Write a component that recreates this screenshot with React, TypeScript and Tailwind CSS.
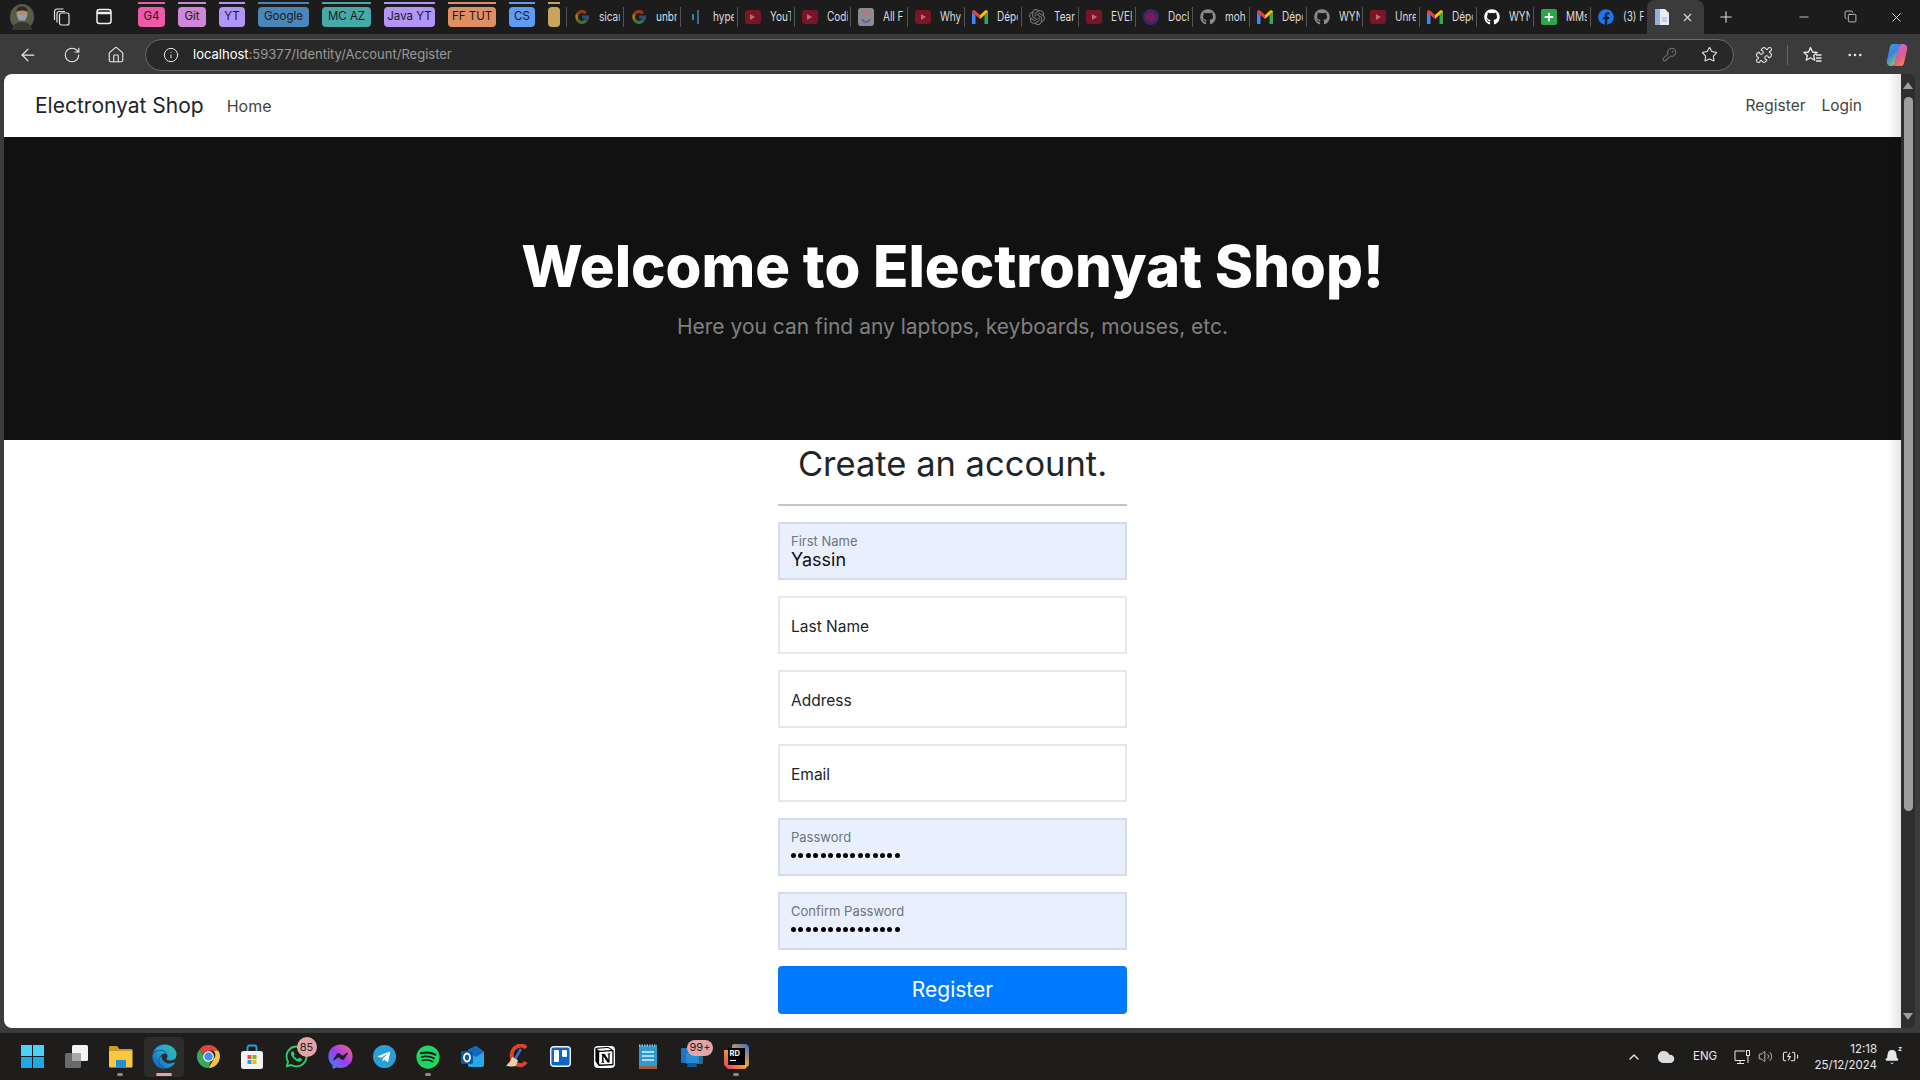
import { ArrowLeft, RotateCw, Home, Info, KeyRound, Star, Puzzle, MoreHorizontal, Plus, X, Minus, Copy, ChevronUp, Cloud, Volume2, BatteryCharging, Bell } from 'lucide-react'
import { FaGithub, FaFacebook, FaWhatsapp, FaFacebookMessenger, FaTelegramPlane, FaSpotify, FaPlus, FaEdge } from 'react-icons/fa'
import { FcGoogle } from 'react-icons/fc'
import { SiNotion, SiOpenai } from 'react-icons/si'

const bookmarks = [
  { label: 'G4', width: 'w-[27px]', mr: 'mr-[13px]', bg: 'bg-[#ec5aa8]' },
  { label: 'Git', width: 'w-[28px]', mr: 'mr-[13px]', bg: 'bg-[#cf87d9]' },
  { label: 'YT', width: 'w-[26px]', mr: 'mr-[13px]', bg: 'bg-[#b295f5]' },
  { label: 'Google', width: 'w-[51px]', mr: 'mr-[13px]', bg: 'bg-[#4a87b8]' },
  { label: 'MC AZ', width: 'w-[49px]', mr: 'mr-[13px]', bg: 'bg-[#45aaa8]' },
  { label: 'Java YT', width: 'w-[51px]', mr: 'mr-[13px]', bg: 'bg-[#b295f5]' },
  { label: 'FF TUT', width: 'w-[48px]', mr: 'mr-[13px]', bg: 'bg-[#e08e63]' },
  { label: 'CS', width: 'w-[26px]', mr: 'mr-[13px]', bg: 'bg-[#5f9bf2]' },
  { label: '', width: 'w-[12px]', mr: 'mr-[6px]', bg: 'bg-[#c9a55c]' },
]

function YouTubeIcon() {
  return (
    <span className="flex h-[14px] w-[16px] items-center justify-center rounded-[3px] bg-[#7a1528]">
      <span className="h-0 w-0 border-y-[3px] border-l-[5px] border-y-transparent border-l-[#b86a78]" />
    </span>
  )
}

function GmailIcon() {
  return (
    <svg width="16" height="14" viewBox="0 0 16 14">
      <path d="M0 2v12h3.5V5z" fill="#4285f4" />
      <path d="M16 2v12h-3.5V5z" fill="#34a853" />
      <path d="M0 2l3.5 3L8 9V5L3 0.6C1.5 0 0 0.6 0 2z" fill="#ea4335" />
      <path d="M16 2l-3.5 3L8 9V5l5-4.4C14.5 0 16 0.6 16 2z" fill="#fbbc04" />
    </svg>
  )
}

function ClickUpIcon() {
  return (
    <svg width="16" height="18" viewBox="0 0 16 18">
      <rect width="16" height="18" rx="3" fill="#8c8c8c" />
      <path d="M4.5 7.5L8 4.5l3.5 3" fill="none" stroke="#e0607a" strokeWidth="1.6" />
      <path d="M4 11c1 2 2.500 3 4 3s3-1 4-3" fill="none" stroke="#4a55d0" strokeWidth="1.6" />
    </svg>
  )
}

const tabs = [
  { icon: <FcGoogle className="h-4 w-4 opacity-60" />, title: 'sicar' },
  { icon: <FcGoogle className="h-4 w-4 opacity-60" />, title: 'unbr' },
  { icon: <span className="flex h-4 w-4 items-center justify-center gap-[3px]"><span className="h-[6px] w-[2px] bg-[#2a8a9a]" /><span className="h-[14px] w-[2px] bg-[#3a6a9a]" /></span>, title: 'hype' },
  { icon: <YouTubeIcon />, title: 'YouT' },
  { icon: <YouTubeIcon />, title: 'Codi' },
  { icon: <ClickUpIcon />, title: 'All F' },
  { icon: <YouTubeIcon />, title: 'Why' },
  { icon: <GmailIcon />, title: 'Dépc' },
  { icon: <SiOpenai className="h-4 w-4 text-[#777]" />, title: 'Tean' },
  { icon: <YouTubeIcon />, title: 'EVEF' },
  { icon: <span className="h-4 w-4 rounded-full border-[3px] border-[#34286e] bg-[#7a1a50]" />, title: 'Dock' },
  { icon: <FaGithub className="h-4 w-4 text-[#8a8a8a]" />, title: 'moh' },
  { icon: <GmailIcon />, title: 'Dépc' },
  { icon: <FaGithub className="h-4 w-4 text-[#8a8a8a]" />, title: 'WYN' },
  { icon: <YouTubeIcon />, title: 'Unre' },
  { icon: <GmailIcon />, title: 'Dépc' },
  { icon: <FaGithub className="h-4 w-4 text-white" />, title: 'WYN' },
  { icon: <span className="flex h-4 w-4 items-center justify-center rounded-[2px] bg-[#2ea44f]"><FaPlus className="h-[10px] w-[10px] text-white" /></span>, title: 'MMs' },
  { icon: <FaFacebook className="h-4 w-4 text-[#1877f2]" />, title: '(3) F' },
]

function Avatar() {
  return (
    <svg width="24" height="26" viewBox="0 0 24 26">
      <ellipse cx="12" cy="13" rx="12" ry="13" fill="#5a5a48" />
      <path d="M2 26c1-6 5-8 10-8s9 2 10 8z" fill="#37382f" />
      <ellipse cx="12" cy="10" rx="5.500" ry="6.500" fill="#a9917c" />
      <path d="M6.500 8c0-4 2.500-5.500 5.500-5.500S17.500 4 17.500 8c-2-2-9-2-11 0z" fill="#33291f" />
      <path d="M7.500 11h9l-1 5.500h-7z" fill="#8fa3a8" />
    </svg>
  )
}

function WorkspacesIcon() {
  return (
    <svg width="17" height="18" viewBox="0 0 17 18" fill="none" stroke="#e4e4e4" strokeWidth="1.2">
      <rect x="6.500" y="5" width="9.500" height="12" rx="2" />
      <path d="M4 14.500V6c0-1.500.8-2.500 2-2.500h6" />
      <path d="M1.500 12V4c0-1.800 1-3 2.500-3h6.500" />
    </svg>
  )
}

function TabsIcon() {
  return (
    <svg width="16" height="17" viewBox="0 0 16 17" fill="none" stroke="#f0f0f0" strokeWidth="1.500">
      <rect x="1" y="1.500" width="14" height="14" rx="2.500" />
      <path d="M1 5h14" strokeWidth="2.500" />
    </svg>
  )
}

function FavoritesIcon() {
  return (
    <svg width="19" height="18" viewBox="0 0 19 18" fill="none" stroke="#e8e8e8" strokeWidth="1.300">
      <path d="M7.500 1.500l2 4.500 4.500.5-3.300 3 1 4.700-4.200-2.400-4.200 2.400 1-4.700L1 6.500 5.500 6z" strokeLinejoin="round" />
      <path d="M13 9h5.500M13 12h5.500M13 15h5.500" />
    </svg>
  )
}

function CopilotIcon() {
  return (
    <svg width="22" height="24" viewBox="0 0 22 24">
      <path d="M7 1h7L9 20c-.8 2.500-2 3-4 3-3 0-5-2.500-4-6L4 4c.5-2 1.500-3 3-3z" fill="url(#copLeft)" />
      <path d="M15 23H8l5-19c.6-2.500 2-3 4-3 3 0 5 2.500 4 6l-3 13c-.5 2-1.500 3-3 3z" fill="url(#copRight)" />
    </svg>
  )
}

function ActiveTabIcon() {
  return (
    <svg width="16" height="18" viewBox="0 0 16 18">
      <path d="M1 1h10l4 4v12H1z" fill="#e6edf5" />
      <rect x="1" y="1" width="5" height="16" fill="#8fb4d6" />
      <rect x="8" y="9" width="5" height="5" fill="#c4d2df" />
    </svg>
  )
}

function Badge({ text, className }: { text: string; className: string }) {
  return (
    <span className={`absolute flex items-center justify-center rounded-full bg-[#e3a6a6] text-[11px] text-[#222] ${className}`}>{text}</span>
  )
}

function TaskIcon({ children, active, running }: { children: React.ReactNode; active?: boolean; running?: boolean }) {
  return (
    <div className="relative flex h-[40px] w-[44px] shrink-0 items-center justify-center">
      {active && <span className="absolute inset-y-0 left-[2px] right-[2px] rounded-[4px] bg-[#2e2b2b]" />}
      <span className="relative flex items-center justify-center">{children}</span>
      {active && <span className="absolute bottom-[1px] h-[3px] w-[16px] rounded-full bg-[#e3a6a6]" />}
      {running && <span className="absolute bottom-[1px] h-[3px] w-[6px] rounded-full bg-[#8a8a8a]" />}
    </div>
  )
}

function FilledField({ label, value, password }: { label: string; value: string; password?: boolean }) {
  return (
    <div className="flex h-[58px] flex-col border-2 border-[#d3dcea] bg-[#e8f0fe] pl-[11px]">
      <span className="mt-[8px] text-[13px] leading-[18px] text-[#6c757d]">{label}</span>
      {password ? (
        <span className="mt-[1px] flex gap-[2.43px] pt-[6px]">
          {Array.from({ length: 15 }).map((_, i) => (
            <span key={i} className="h-[5px] w-[5px] rounded-full bg-black" />
          ))}
        </span>
      ) : (
        <span className="text-[18px] leading-[20px] text-[#111]">{value}</span>
      )}
    </div>
  )
}

function EmptyField({ label }: { label: string }) {
  return (
    <div className="flex h-[58px] items-center border-2 border-[#e6e8ec] bg-white pl-[11px] pt-[3px] text-[15.5px] text-[#212529]">
      {label}
    </div>
  )
}

export default function App() {
  return (
    <div className="flex h-screen w-full flex-col overflow-hidden bg-[#3b3b3b] font-['Inter','Liberation_Sans',sans-serif]">
      <svg className="absolute h-0 w-0">
        <defs>
          <linearGradient id="copLeft" x1="0" y1="0" x2="0.6" y2="1">
            <stop offset="0" stopColor="#2fb6d8" />
            <stop offset="0.5" stopColor="#3f7fe8" />
            <stop offset="1" stopColor="#8fd24a" />
          </linearGradient>
          <linearGradient id="copRight" x1="0.4" y1="0" x2="1" y2="1">
            <stop offset="0" stopColor="#b26be0" />
            <stop offset="0.5" stopColor="#e85a8a" />
            <stop offset="1" stopColor="#f59a3a" />
          </linearGradient>
          <linearGradient id="edgeFill" x1="1" y1="0" x2="0" y2="1">
            <stop offset="0" stopColor="#35c1a0" />
            <stop offset="0.5" stopColor="#1f9fe0" />
            <stop offset="1" stopColor="#0c59a4" />
          </linearGradient>
          <linearGradient id="messengerFill" x1="0" y1="1" x2="1" y2="0">
            <stop offset="0" stopColor="#2f8bfb" />
            <stop offset="0.5" stopColor="#a03cf0" />
            <stop offset="1" stopColor="#fb6a70" />
          </linearGradient>
          <linearGradient id="riderFill" x1="0" y1="1" x2="1" y2="0">
            <stop offset="0" stopColor="#e8336b" />
            <stop offset="0.5" stopColor="#f0a828" />
            <stop offset="1" stopColor="#2f6fe0" />
          </linearGradient>
        </defs>
      </svg>

      {/* tab strip */}
      <div className="flex h-[34px] shrink-0 items-start bg-[#1c1c1c] text-[#dcdcdc]">
        <div className="ml-[10px] mr-[19px] mt-[4px]"><Avatar /></div>
        <div className="mr-[26px] mt-[8px]"><WorkspacesIcon /></div>
        <div className="mr-[26px] mt-[8px]"><TabsIcon /></div>
        {bookmarks.map((b, i) => (
          <div key={i} className={`${b.width} ${b.mr} mt-[2px] shrink-0`}>
            <div className={`h-[2px] ${b.bg}`} />
            <div className={`mt-[3px] flex h-[20px] items-center justify-center rounded-[4px] text-[11.5px] text-[#1a1a1a] ${b.bg}`}>{b.label}</div>
          </div>
        ))}
        {tabs.map((t, i) => (
          <div key={i} className="mt-[7px] flex h-[20px] w-[56.9px] shrink-0 items-center border-l border-[#555] pl-[7px]">
            <span className="flex h-4 w-[16px] shrink-0 items-center justify-center">{t.icon}</span>
            <span className="ml-[9px] w-[26px] shrink-0 origin-left scale-x-[0.8] overflow-hidden whitespace-nowrap text-[12.5px]">{t.title}</span>
          </div>
        ))}
        <div className="flex h-[34px] w-[57px] shrink-0 items-center rounded-t-[8px] bg-[#3b3b3b] pl-[7px]">
          <ActiveTabIcon />
          <X className="ml-[11px] h-[13px] w-[13px]" />
        </div>
        <Plus className="ml-[13px] mt-[8px] h-[18px] w-[18px]" strokeWidth={1.5} />
        <div className="ml-auto mr-[16px] mt-[10px] flex gap-[33px]">
          <Minus className="h-[14px] w-[14px]" strokeWidth={1.5} />
          <Copy className="h-[13px] w-[13px]" strokeWidth={1.5} />
          <X className="-ml-px h-[15px] w-[15px]" strokeWidth={1.5} />
        </div>
      </div>

      {/* toolbar */}
      <div className="flex h-[40px] shrink-0 items-center bg-[#3b3b3b] pt-[1px] text-[#e8e8e8]">
        <ArrowLeft className="ml-[18px] h-[20px] w-[20px]" strokeWidth={1.5} />
        <RotateCw className="ml-[25px] h-[18px] w-[18px]" strokeWidth={1.5} />
        <Home className="ml-[26px] h-[18px] w-[18px]" strokeWidth={1.5} />
        <div className="ml-[20px] flex h-[32px] w-[1589px] items-center rounded-full border border-[#6a6a6a] bg-[#282828]">
          <Info className="ml-[17px] h-[16px] w-[16px]" strokeWidth={1.5} />
          <span className="ml-[14px] text-[13px] text-white">localhost<span className="text-[#9a9a9a]">:59377/Identity/Account/Register</span></span>
          <KeyRound className="ml-auto h-[15px] w-[15px] text-[#888]" strokeWidth={1.5} />
          <Star className="ml-[24px] mr-[15px] h-[17px] w-[17px]" strokeWidth={1.5} />
        </div>
        <Puzzle className="ml-[21px] h-[18px] w-[18px]" strokeWidth={1.5} />
        <span className="ml-[14px] h-[20px] w-px bg-[#666]" />
        <div className="ml-[15px]"><FavoritesIcon /></div>
        <MoreHorizontal className="ml-[24px] h-[18px] w-[18px]" strokeWidth={1.5} />
        <div className="ml-[22px]"><CopilotIcon /></div>
      </div>

      {/* page area */}
      <div className="flex min-h-0 flex-1 pl-[4px]">
        <div className="relative flex min-w-0 flex-1 flex-col overflow-hidden rounded-l-[8px] bg-white">
          <nav className="flex h-[63px] shrink-0 items-center pl-[31px] pr-[39px] text-[#212529]">
            <span className="text-[21px]">Electronyat Shop</span>
            <span className="ml-[23px] text-[16px] text-[#444]">Home</span>
            <span className="ml-auto text-[15.5px] text-[#444]">Register</span>
            <span className="ml-[16px] text-[15.5px] text-[#444]">Login</span>
          </nav>
          <header className="flex h-[303px] shrink-0 flex-col items-center bg-[#111112] pt-[91px]">
            <h1 className="text-[58px] font-extrabold leading-[76px] text-white">Welcome to Electronyat Shop!</h1>
            <p className="mt-[8px] text-[21px] leading-[30px] text-[#808080]">Here you can find any laptops, keyboards, mouses, etc.</p>
          </header>
          <main className="mx-auto flex w-[349px] flex-col">
            <h2 className="mt-[2px] text-center text-[34.5px] leading-[44px] text-[#212529]">Create an account.</h2>
            <hr className="mt-[18px] border-t-2 border-[#c6c6c6]" />
            <div className="mt-[16px] flex flex-col gap-[16px]">
              <FilledField label="First Name" value="Yassin" />
              <EmptyField label="Last Name" />
              <EmptyField label="Address" />
              <EmptyField label="Email" />
              <FilledField label="Password" value="" password />
              <FilledField label="Confirm Password" value="" password />
              <button className="flex h-[48px] items-center justify-center rounded-[4px] bg-[#007bff] text-[21px] text-white">Register</button>
            </div>
          </main>
          <span className="pointer-events-none absolute inset-y-0 right-0 w-[14px] bg-gradient-to-l from-black/10 to-transparent" />
        </div>
        <div className="mr-[5px] flex w-[14px] shrink-0 flex-col items-center rounded-r-[6px] bg-[#2e2e2e]">
          <span className="mt-[8px] h-0 w-0 border-x-[5px] border-b-[7px] border-x-transparent border-b-[#9e9e9e]" />
          <span className="mt-[8px] h-[714px] w-[9px] rounded-full bg-[#9e9e9e]" />
          <span className="mb-[8px] mt-auto h-0 w-0 border-x-[5px] border-t-[7px] border-x-transparent border-t-[#9e9e9e]" />
        </div>
      </div>

      {/* taskbar */}
      <div className="mt-[5px] flex h-[47px] shrink-0 items-center bg-[#1f1c1c] pl-[10px] text-[#e8e8e8]">
        <TaskIcon>
          <span className="grid h-[23px] w-[23px] grid-cols-2 gap-[1px]">
            <span className="bg-[#4fd0f7]" />
            <span className="bg-[#4fd0f7]" />
            <span className="bg-[#1ea8e6]" />
            <span className="bg-[#1ea8e6]" />
          </span>
        </TaskIcon>
        <TaskIcon>
          <svg width="25" height="25" viewBox="0 0 25 25">
            <rect x="1" y="9" width="16" height="15" rx="1.500" fill="#6a6a6a" />
            <rect x="8" y="1" width="16" height="16" rx="1.500" fill="#f4f4f4" />
            <rect x="8" y="9" width="9" height="8" fill="#a8a8a8" />
          </svg>
        </TaskIcon>
        <TaskIcon running>
          <svg width="25" height="24" viewBox="0 0 25 24">
            <path d="M1 3c0-1 .5-2 2-2h6l2 3h12c1 0 1.500 .5 1.500 1.500V21c0 1-.5 1.500-1.500 1.500H2.500C1.500 22.500 1 22 1 21z" fill="#f6c945" />
            <path d="M1 3c0-1 .5-2 2-2h6l2 3h13v2H1z" fill="#d39a1e" />
            <rect x="8" y="15" width="10" height="7.500" rx="1" fill="#1f8fd8" />
          </svg>
        </TaskIcon>
        <TaskIcon active>
          <FaEdge className="h-[25px] w-[25px]" fill="url(#edgeFill)" />
        </TaskIcon>
        <TaskIcon>
          <svg width="25" height="25" viewBox="0 0 24 24">
            <path d="M12 1a11 11 0 0 1 9.500 5.500H12a5.500 5.500 0 0 0-5.200 3.700L3.500 5A11 11 0 0 1 12 1z" fill="#e0453a" />
            <path d="M21.500 6.500A11 11 0 0 1 12 23l4.700-8.200a5.500 5.500 0 0 0 0-8.300z" fill="#f6c63e" />
            <path d="M12 23A11 11 0 0 1 3.500 5l4.800 8.500a5.500 5.500 0 0 0 5.700 3.800z" fill="#3aa757" />
            <circle cx="12" cy="12" r="5.200" fill="#fff" />
            <circle cx="12" cy="12" r="4.100" fill="#4a8af4" />
          </svg>
        </TaskIcon>
        <TaskIcon>
          <svg width="24" height="26" viewBox="0 0 24 26">
            <path d="M7.500 8V4c0-1.500 1-2.500 2-2.500h5c1 0 2 1 2 2.500v4" fill="none" stroke="#1fa3e6" strokeWidth="1.800" />
            <rect x="1" y="7" width="22" height="18" rx="2.500" fill="#f2f2f2" />
            <rect x="7.500" y="11" width="4" height="4" fill="#e8562e" />
            <rect x="12.500" y="11" width="4" height="4" fill="#7cb82f" />
            <rect x="7.500" y="16" width="4" height="4" fill="#1fa3e6" />
            <rect x="12.500" y="16" width="4" height="4" fill="#f6b900" />
          </svg>
        </TaskIcon>
        <TaskIcon>
          <FaWhatsapp className="h-[25px] w-[25px] text-[#25d366]" />
          <Badge text="85" className="-right-[8px] -top-[7px] h-[20px] w-[20px]" />
        </TaskIcon>
        <TaskIcon>
          <FaFacebookMessenger className="h-[25px] w-[25px]" fill="url(#messengerFill)" />
        </TaskIcon>
        <TaskIcon>
          <span className="flex h-[23px] w-[23px] items-center justify-center rounded-full bg-[#2a9fd8]">
            <FaTelegramPlane className="h-[14px] w-[14px] text-white" />
          </span>
        </TaskIcon>
        <TaskIcon running>
          <FaSpotify className="h-[24px] w-[24px] text-[#1ed760]" />
        </TaskIcon>
        <TaskIcon>
          <svg width="25" height="24" viewBox="0 0 25 24">
            <path d="M8 5l8-4 8 6v13c0 1-1 2-2 2H10c-1 0-2-1-2-2z" fill="#28a8ea" />
            <path d="M8 5l8-4 8 6-8 5-8-5z" fill="#0f6cbd" />
            <rect x="1" y="6" width="12" height="13" rx="1.500" fill="#0a5aa8" />
            <ellipse cx="7" cy="12.500" rx="3" ry="4" fill="none" stroke="#fff" strokeWidth="1.800" />
          </svg>
        </TaskIcon>
        <TaskIcon>
          <svg width="25" height="25" viewBox="0 0 25 25">
            <path d="M22 4c-2-2.500-5-3-8-2-5 2-7 7-6 12 1 5 6 8 10 7 2-.5 3-1.500 4-3" fill="none" stroke="#d9432f" strokeWidth="4" />
            <path d="M17 5L11 15" stroke="#2f6fd0" strokeWidth="2.500" />
            <path d="M8 13l6 3-2 6c-3 1-8 0-10 0 2-2 5-5 6-9z" fill="#f0cfa8" />
          </svg>
        </TaskIcon>
        <TaskIcon>
          <svg width="21" height="21" viewBox="0 0 21 21">
            <rect x="0.700" y="0.700" width="19.600" height="19.600" rx="3" fill="#0c66c8" stroke="#f4f4f4" strokeWidth="1.400" />
            <rect x="4" y="4" width="5" height="12" rx="1" fill="#fff" />
            <rect x="12" y="4" width="5" height="7" rx="1" fill="#fff" />
          </svg>
        </TaskIcon>
        <TaskIcon>
          <span className="flex h-[22px] w-[21px] items-center justify-center rounded-[4px] bg-white">
            <SiNotion className="h-[19px] w-[19px] text-black" />
          </span>
        </TaskIcon>
        <TaskIcon>
          <svg width="20" height="25" viewBox="0 0 20 25">
            <rect x="1" y="2" width="18" height="22" fill="#2f9bcf" />
            <path d="M1 1.500h18" stroke="#8fd0ea" strokeWidth="2" strokeDasharray="1.500 1" />
            <path d="M4 8h12M4 12h12M4 16h12" stroke="#d6eef8" strokeWidth="1.300" />
            <rect x="1" y="22" width="18" height="3" fill="#a0603a" />
          </svg>
        </TaskIcon>
        <TaskIcon>
          <svg width="24" height="24" viewBox="0 0 24 24">
            <rect x="1" y="3" width="18" height="15" rx="1" fill="#1e73c8" />
            <rect x="6" y="8" width="17" height="11" rx="1" fill="#2f9be0" opacity="0.6" />
            <path d="M8 18h8l1 4H7z" fill="#145a9e" />
          </svg>
          <Badge text="99+" className="-right-[9px] -top-[5px] h-[16px] w-[26px]" />
        </TaskIcon>
        <TaskIcon running>
          <span className="relative flex h-[25px] w-[25px] items-center justify-center">
            <svg className="absolute inset-0" width="25" height="25" viewBox="0 0 25 25">
              <path d="M0 6h8V2c0-1 1-2 2-2h11c2 0 4 2 4 4v17l-4 4H4l-4-4z" fill="url(#riderFill)" />
            </svg>
            <span className="relative flex h-[17px] w-[17px] flex-col bg-black pl-[2px] pt-[2px] text-[7.5px] font-bold leading-[8px] text-white">
              RD
              <span className="mt-[2px] h-[1px] w-[6px] bg-white" />
            </span>
          </span>
        </TaskIcon>

        {/* system tray */}
        <ChevronUp className="ml-auto h-[16px] w-[16px]" strokeWidth={2} />
        <Cloud className="ml-[15px] h-[18px] w-[18px] fill-[#dcdcdc] text-[#dcdcdc]" />
        <span className="ml-[18px] w-[23px] text-[11.5px]">ENG</span>
        <svg className="ml-[18px]" width="16" height="16" viewBox="0 0 16 16" fill="none" stroke="#e8e8e8" strokeWidth="1">
          <path d="M11 2H1v9.500h10M6 11.500V14M3 14.500h7" />
          <rect x="12.500" y="1.500" width="3" height="5" />
          <path d="M14 6.500V14" />
        </svg>
        <Volume2 className="ml-[8px] h-[15px] w-[15px]" strokeWidth={1.25} />
        <BatteryCharging className="ml-[9px] h-[17px] w-[17px]" strokeWidth={1.5} />
        <div className="ml-[12px] w-[66px] text-right text-[11.5px] leading-[16px]">
          <div>12:18</div>
          <div>25/12/2024</div>
        </div>
        <span className="relative ml-[7px] mr-[20px] flex">
          <Bell className="h-[16px] w-[16px] fill-[#e8e8e8]" strokeWidth={1.25} />
          <span className="absolute -right-[2px] -top-[4px] text-[7px] font-bold leading-[8px]">z</span>
        </span>
      </div>
    </div>
  )
}
